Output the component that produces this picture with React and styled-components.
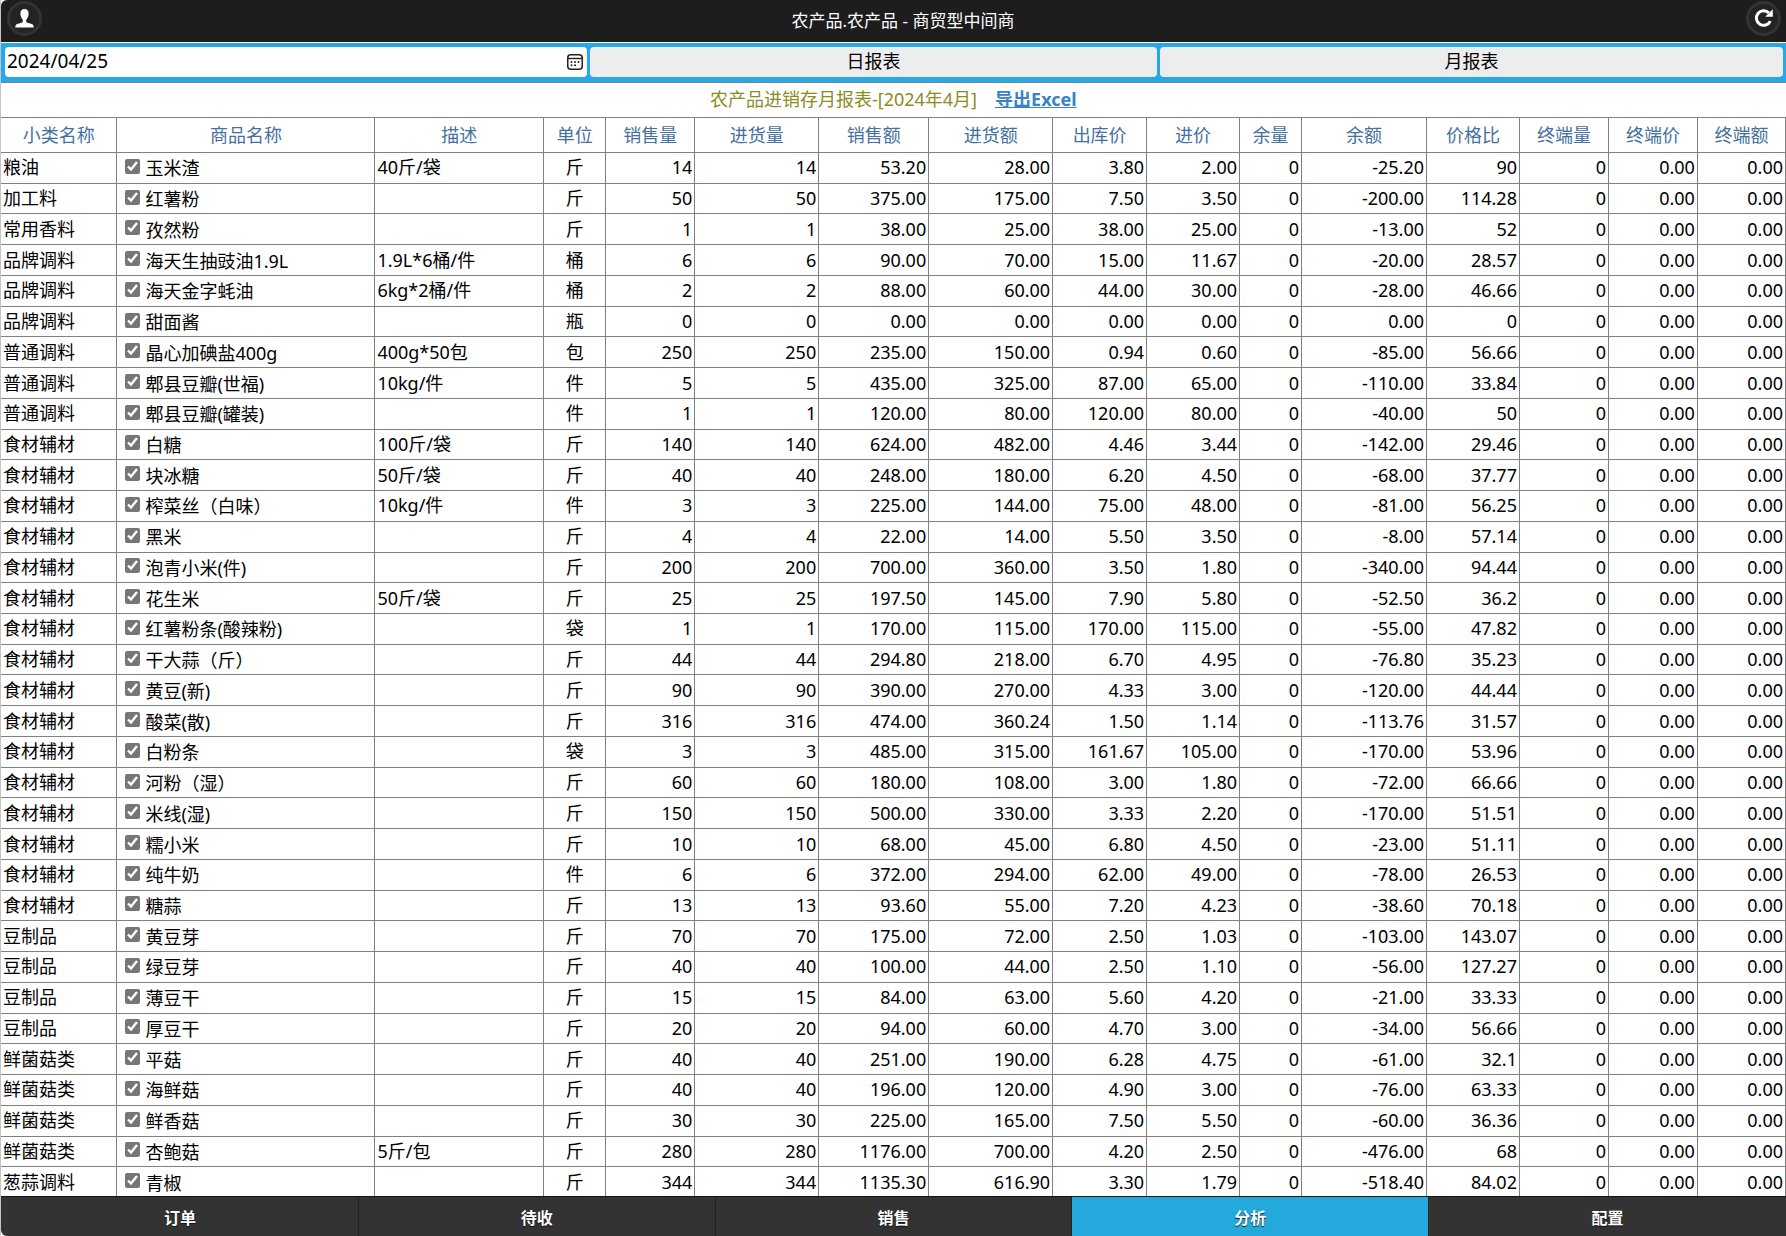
import React, { useState } from "react";
import styled, { createGlobalStyle } from "styled-components";

const GlobalStyle = createGlobalStyle`
  *, *::before, *::after { box-sizing: border-box; }
  body { margin: 0; background: #fff; color: #000; font: 18px/29px "Noto Sans", "Noto Sans CJK SC", sans-serif; }
  button, input { font-family: inherit; color: inherit; }
`;

const Page = styled.div`
  height: 100vh;
  display: grid;
  grid-template-columns: minmax(0, 1fr);
  grid-template-rows: auto auto minmax(0, 1fr) auto;
  border-left: 1px solid #c4c4c4;
`;

const Header = styled.header`
  display: flex;
  align-items: center;
  justify-content: space-between;
  height: 42px;
  padding: 0 5px 6px 6px;
  background: #1d1d1d;
  color: #fff;
  border-top-left-radius: 6px;
`;

const AppTitle = styled.h1`
  margin: 6px 0 0;
  padding-left: 18px;
  font-size: 17px;
  line-height: 24px;
  font-weight: 400;
`;

const RoundButton = styled.button`
  display: grid;
  place-items: center;
  width: 35px;
  height: 35px;
  padding: 0;
  border: 3px solid #333;
  border-radius: 50%;
  background: #232323;
  color: #fff;
`;

const Toolbar = styled.form`
  display: grid;
  grid-template-columns: 582fr 567fr 623fr;
  gap: 3px;
  margin-top: 1px;
  padding: 4px 3px 5px 4px;
  background: #26a9e8;
`;

const DateField = styled.label`
  display: flex;
  align-items: center;
  height: 30px;
  padding: 0 4px 0 2px;
  border-radius: 4px;
  background: #fff;
`;

const DateInput = styled.input`
  flex: 1;
  min-width: 0;
  height: 30px;
  padding: 0 0 2px;
  border: 0;
  outline: 0;
  background: none;
  font-size: 19px;
  line-height: 28px;
`;

const ReportButton = styled.button`
  height: 30px;
  padding: 0 0 2px;
  border: 0;
  border-radius: 4px;
  background: #ededed;
  font-size: 18px;
  line-height: 28px;
`;

const Report = styled.main`
  margin-bottom: -2px;
  overflow: hidden auto;
`;

const Table = styled.table`
  width: 100%;
  height: 100%;
  table-layout: fixed;
  border-collapse: collapse;
  caption-side: top;
`;

const Heading = styled.th`
  height: 35px;
  padding: 0;
  border: 1px solid #808080;
  border-left-width: ${(p) => (p.$first ? 0 : 1)}px;
  color: #44709f;
  font-weight: 400;
  text-align: center;
`;

const TitleCell = styled.th`
  height: 35px;
  padding: 0 0 2px;
  border-top: 1px solid #808080;
  color: #8b8b1e;
  font-weight: 400;
`;

const ExportLink = styled.a`
  margin-left: 18px;
  color: #3a82c8;
  font-weight: 700;
  text-decoration: underline;
`;

const Cell = styled.td`
  padding: 0 2px;
  border: 1px solid #808080;
  border-left-width: ${(p) => (p.$first ? 0 : 1)}px;
  text-align: ${(p) => p.$align || "right"};
  white-space: nowrap;
  overflow: hidden;
`;

const ItemLabel = styled.label`
  display: flex;
  align-items: center;
  gap: 5px;
  padding: 2px 0 0 6px;
  line-height: 27px;
`;

const Tick = styled.input`
  width: 15px;
  height: 15px;
  margin: 0 0 5px;
  accent-color: #767676;
`;

const Nav = styled.nav`
  display: grid;
  grid-template-columns: repeat(5, 1fr);
  padding-left: 1px;
  border-top: 1px solid #151515;
  background: #333;
  border-bottom-left-radius: 6px;
  z-index: 1;
`;

const NavLink = styled.a`
  height: 39px;
  padding-top: 7px;
  border-right: 1px solid #222;
  background: ${(p) => (p.$active ? "#24a9dc" : "transparent")};
  color: #fff;
  font-size: 16px;
  line-height: 28px;
  font-weight: 700;
  text-align: center;
  text-decoration: none;
  text-shadow: 0 1px 1px #111;
  &:last-child { border-right: 0; }
`;

const columns = [
  ["小类名称", 116], ["商品名称", 258], ["描述", 169], ["单位", 62], ["销售量", 89],
  ["进货量", 124], ["销售额", 110], ["进货额", 124], ["出库价", 94], ["进价", 93],
  ["余量", 62], ["余额", 125], ["价格比", 93], ["终端量", 89], ["终端价", 89], ["终端额", 88],
];
const totalWidth = columns.reduce((sum, [, w]) => sum + w, 0);

const rows = `粮油|玉米渣|40斤/袋|斤|14|53.20|28.00|3.80|2.00|-25.20|90
加工料|红薯粉||斤|50|375.00|175.00|7.50|3.50|-200.00|114.28
常用香料|孜然粉||斤|1|38.00|25.00|38.00|25.00|-13.00|52
品牌调料|海天生抽豉油1.9L|1.9L*6桶/件|桶|6|90.00|70.00|15.00|11.67|-20.00|28.57
品牌调料|海天金字蚝油|6kg*2桶/件|桶|2|88.00|60.00|44.00|30.00|-28.00|46.66
品牌调料|甜面酱||瓶|0|0.00|0.00|0.00|0.00|0.00|0
普通调料|晶心加碘盐400g|400g*50包|包|250|235.00|150.00|0.94|0.60|-85.00|56.66
普通调料|郫县豆瓣(世福)|10kg/件|件|5|435.00|325.00|87.00|65.00|-110.00|33.84
普通调料|郫县豆瓣(罐装)||件|1|120.00|80.00|120.00|80.00|-40.00|50
食材辅材|白糖|100斤/袋|斤|140|624.00|482.00|4.46|3.44|-142.00|29.46
食材辅材|块冰糖|50斤/袋|斤|40|248.00|180.00|6.20|4.50|-68.00|37.77
食材辅材|榨菜丝（白味）|10kg/件|件|3|225.00|144.00|75.00|48.00|-81.00|56.25
食材辅材|黑米||斤|4|22.00|14.00|5.50|3.50|-8.00|57.14
食材辅材|泡青小米(件)||斤|200|700.00|360.00|3.50|1.80|-340.00|94.44
食材辅材|花生米|50斤/袋|斤|25|197.50|145.00|7.90|5.80|-52.50|36.2
食材辅材|红薯粉条(酸辣粉)||袋|1|170.00|115.00|170.00|115.00|-55.00|47.82
食材辅材|干大蒜（斤）||斤|44|294.80|218.00|6.70|4.95|-76.80|35.23
食材辅材|黄豆(新)||斤|90|390.00|270.00|4.33|3.00|-120.00|44.44
食材辅材|酸菜(散)||斤|316|474.00|360.24|1.50|1.14|-113.76|31.57
食材辅材|白粉条||袋|3|485.00|315.00|161.67|105.00|-170.00|53.96
食材辅材|河粉（湿）||斤|60|180.00|108.00|3.00|1.80|-72.00|66.66
食材辅材|米线(湿)||斤|150|500.00|330.00|3.33|2.20|-170.00|51.51
食材辅材|糯小米||斤|10|68.00|45.00|6.80|4.50|-23.00|51.11
食材辅材|纯牛奶||件|6|372.00|294.00|62.00|49.00|-78.00|26.53
食材辅材|糖蒜||斤|13|93.60|55.00|7.20|4.23|-38.60|70.18
豆制品|黄豆芽||斤|70|175.00|72.00|2.50|1.03|-103.00|143.07
豆制品|绿豆芽||斤|40|100.00|44.00|2.50|1.10|-56.00|127.27
豆制品|薄豆干||斤|15|84.00|63.00|5.60|4.20|-21.00|33.33
豆制品|厚豆干||斤|20|94.00|60.00|4.70|3.00|-34.00|56.66
鲜菌菇类|平菇||斤|40|251.00|190.00|6.28|4.75|-61.00|32.1
鲜菌菇类|海鲜菇||斤|40|196.00|120.00|4.90|3.00|-76.00|63.33
鲜菌菇类|鲜香菇||斤|30|225.00|165.00|7.50|5.50|-60.00|36.36
鲜菌菇类|杏鲍菇|5斤/包|斤|280|1176.00|700.00|4.20|2.50|-476.00|68
葱蒜调料|青椒||斤|344|1135.30|616.90|3.30|1.79|-518.40|84.02`
  .split("\n")
  .map((line) => line.split("|"));

const UserIcon = () => (
  <svg width="19" height="19" viewBox="0 0 19 19" fill="currentColor" aria-hidden="true">
    <path d="M9.500 0C6.900 0 5.400 1.700 5.400 4.500c0 2.600 1 5 2.400 6.200v1.500c0 .8-.5 1.200-1.400 1.500L2.200 15C.9 15.500.3 16.400.2 18.500h18.600c-.1-2.100-.7-3-2-3.500l-4.200-1.300c-.9-.3-1.400-.7-1.400-1.500v-1.500c1.400-1.200 2.400-3.600 2.400-6.200C13.600 1.700 12.100 0 9.500 0Z" />
  </svg>
);

const RefreshIcon = () => (
  <svg width="20" height="20" viewBox="0 0 20 20" fill="none" aria-hidden="true">
    <path d="M16.300 13.200A7.300 7.300 0 1 1 14.900 4.900" stroke="currentColor" strokeWidth="3" />
    <path d="M18.800 1.200v7.600h-7.600Z" fill="currentColor" />
  </svg>
);

const CalendarIcon = () => (
  <svg width="16" height="16" viewBox="0 0 16 16" fill="none" aria-hidden="true">
    <rect x="0.750" y="0.750" width="14.500" height="14.500" rx="3" stroke="#222" strokeWidth="1.500" />
    <path d="M1 4.500h14" stroke="#222" strokeWidth="1.400" />
    <g fill="#222">
      <circle cx="4.500" cy="8" r="1" /><circle cx="8" cy="8" r="1" /><circle cx="11.500" cy="8" r="1" />
      <circle cx="4.500" cy="11.300" r="1" /><circle cx="8" cy="11.300" r="1" />
    </g>
  </svg>
);

function ItemRow({ row }) {
  const [checked, setChecked] = useState(true);
  const [category, name, note, unit, count, sold, bought, outPrice, inPrice, balance, ratio] = row;
  const figures = [count, count, sold, bought, outPrice, inPrice, "0", balance, ratio, "0", "0.00", "0.00"];
  return (
    <tr>
      <Cell $first $align="left">{category}</Cell>
      <Cell $align="left">
        <ItemLabel>
          <Tick type="checkbox" checked={checked} onChange={(e) => setChecked(e.target.checked)} />
          {name}
        </ItemLabel>
      </Cell>
      <Cell $align="left">{note}</Cell>
      <Cell $align="center">{unit}</Cell>
      {figures.map((value, i) => <Cell key={i}>{value}</Cell>)}
    </tr>
  );
}

export default function App() {
  const [date, setDate] = useState("2024/04/25");
  return (
    <>
      <GlobalStyle />
      <Page>
        <Header>
          <RoundButton type="button" aria-label="用户"><UserIcon /></RoundButton>
          <AppTitle>农产品.农产品 - 商贸型中间商</AppTitle>
          <RoundButton type="button" aria-label="刷新"><RefreshIcon /></RoundButton>
        </Header>
        <Toolbar onSubmit={(e) => e.preventDefault()}>
          <DateField>
            <DateInput type="text" aria-label="日期" value={date} onChange={(e) => setDate(e.target.value)} />
            <CalendarIcon />
          </DateField>
          <ReportButton type="button">日报表</ReportButton>
          <ReportButton type="button">月报表</ReportButton>
        </Toolbar>
        <Report>
          <Table>
            <colgroup>
              {columns.map(([label, width]) => (
                <col key={label} style={{ width: `${(width / totalWidth) * 100}%` }} />
              ))}
            </colgroup>
            <thead>
              <tr>
                <TitleCell colSpan={columns.length}>
                  农产品进销存月报表-[2024年4月]
                  <ExportLink href="#export">导出Excel</ExportLink>
                </TitleCell>
              </tr>
              <tr>
                {columns.map(([label], i) => <Heading key={label} $first={i === 0} scope="col">{label}</Heading>)}
              </tr>
            </thead>
            <tbody>
              {rows.map((row) => <ItemRow key={row[1]} row={row} />)}
            </tbody>
          </Table>
        </Report>
        <Nav>
          {["订单", "待收", "销售", "分析", "配置"].map((label) => (
            <NavLink key={label} href="#" $active={label === "分析"}>{label}</NavLink>
          ))}
        </Nav>
      </Page>
    </>
  );
}
